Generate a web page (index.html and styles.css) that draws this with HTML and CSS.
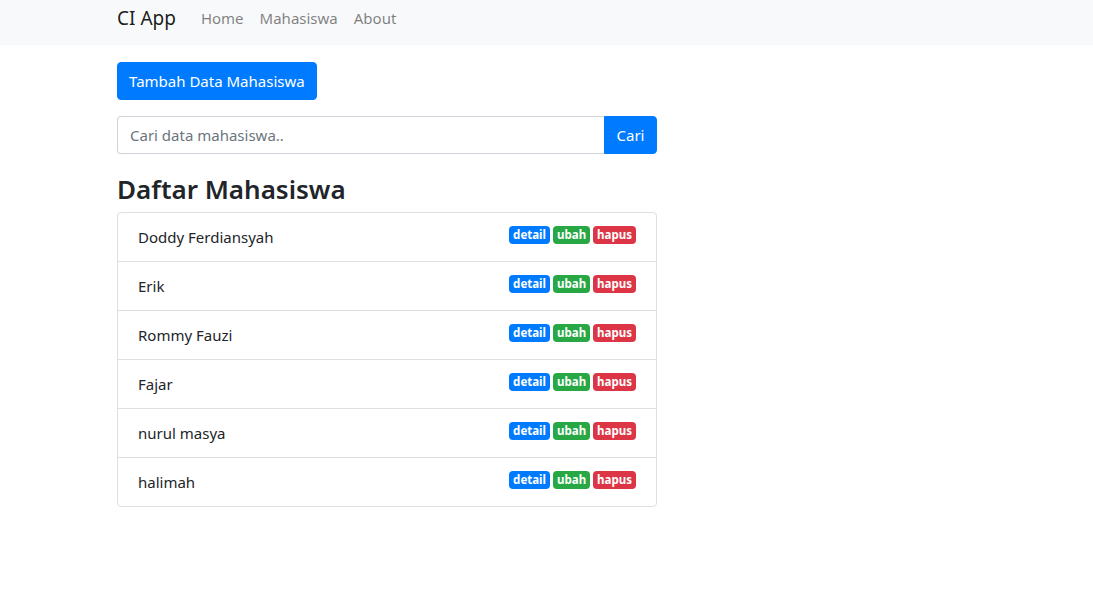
FILE: index.html
```html
<!DOCTYPE html>
<html lang="id">
<head>
<meta charset="utf-8">
<title>CI App</title>
<link rel="stylesheet" href="styles.css">
</head>
<body>
<nav class="navbar">
  <div class="container nav-inner">
    <a class="brand" href="#">CI App</a>
    <ul class="nav-links">
      <li><a href="#">Home</a></li>
      <li><a href="#">Mahasiswa</a></li>
      <li><a href="#">About</a></li>
    </ul>
  </div>
</nav>
<main class="container">
  <div class="col">
    <button class="btn btn-primary btn-add">Tambah Data Mahasiswa</button>
    <form class="input-group">
      <input class="form-control" type="text" placeholder="Cari data mahasiswa..">
      <button class="btn btn-primary btn-search" type="button">Cari</button>
    </form>
    <h3 class="title">Daftar Mahasiswa</h3>
    <ul class="list-group">
      <li class="list-item"><span>Doddy Ferdiansyah</span><span class="badges"><a class="badge b-blue">detail</a><a class="badge b-green">ubah</a><a class="badge b-red">hapus</a></span></li>
      <li class="list-item"><span>Erik</span><span class="badges"><a class="badge b-blue">detail</a><a class="badge b-green">ubah</a><a class="badge b-red">hapus</a></span></li>
      <li class="list-item"><span>Rommy Fauzi</span><span class="badges"><a class="badge b-blue">detail</a><a class="badge b-green">ubah</a><a class="badge b-red">hapus</a></span></li>
      <li class="list-item"><span>Fajar</span><span class="badges"><a class="badge b-blue">detail</a><a class="badge b-green">ubah</a><a class="badge b-red">hapus</a></span></li>
      <li class="list-item"><span>nurul masya</span><span class="badges"><a class="badge b-blue">detail</a><a class="badge b-green">ubah</a><a class="badge b-red">hapus</a></span></li>
      <li class="list-item"><span>halimah</span><span class="badges"><a class="badge b-blue">detail</a><a class="badge b-green">ubah</a><a class="badge b-red">hapus</a></span></li>
    </ul>
  </div>
</main>
</body>
</html>
```
FILE: styles.css
```css
* { box-sizing: border-box; }
body {
  margin: 0;
  font-family: "Noto Sans", "Open Sans", sans-serif;
  font-size: 15px;
  line-height: 24px;
  color: #212529;
  background: #fff;
}
.container {
  padding-left: 117px;
}
.navbar {
  background: #f8f9fa;
  height: 45px;
}
.nav-inner {
  display: flex;
  align-items: center;
  height: 45px;
  padding-bottom: 9px;
}
.brand {
  font-size: 19px;
  color: rgba(0,0,0,.9);
  text-decoration: none;
  margin-right: 25px;
  line-height: 30px;
}
.nav-links {
  display: flex;
  list-style: none;
  margin: 0;
  padding: 0;
  gap: 16px;
}
.nav-links a {
  color: rgba(0,0,0,.5);
  text-decoration: none;
}
.col {
  width: 540px;
  padding-top: 17px;
}
.btn {
  font-family: inherit;
  font-size: 15px;
  line-height: 24px;
  border: 1px solid #007bff;
  background: #007bff;
  color: #fff;
  border-radius: 4px;
  padding: 6px 12px;
  display: block;
  white-space: nowrap;
}
.btn-add {
  height: 38px;
  padding: 6px 11px;
}
.input-group {
  display: flex;
  margin: 16px 0 0;
}
.form-control {
  flex: 1;
  height: 38px;
  border: 1px solid #ced4da;
  border-radius: 4px 0 0 4px;
  padding: 6px 12px;
  font-family: inherit;
  font-size: 15px;
  color: #495057;
  border-right: none;
}
.form-control::placeholder { color: #6c757d; }
.btn-search {
  width: 53px;
  height: 38px;
  border-radius: 0 4px 4px 0;
  padding: 6px 10px;
}
.title {
  font-size: 26px;
  font-weight: 600;
  line-height: 32px;
  margin: 19px 0 7px;
}
.list-group {
  list-style: none;
  margin: 0;
  padding: 0;
  border: 1px solid #dfdfdf;
  border-radius: 4px;
}
.list-item {
  display: flex;
  justify-content: space-between;
  align-items: flex-start;
  padding: 12px 20px;
  height: 49px;
  border-bottom: 1px solid #dfdfdf;
}
.list-item:last-child { border-bottom: none; height: 48px; }
.badges {
  display: flex;
  gap: 3px;
  padding-top: 1px;
}
.badge {
  display: inline-block;
  font-size: 11.5px;
  font-weight: 700;
  line-height: 1;
  color: #fff;
  padding: 3px 4px 3px;
  border-radius: 4px;
  height: 18px;
}
.b-blue { background: #007bff; }
.b-green { background: #28a745; }
.b-red { background: #dc3545; }
```
